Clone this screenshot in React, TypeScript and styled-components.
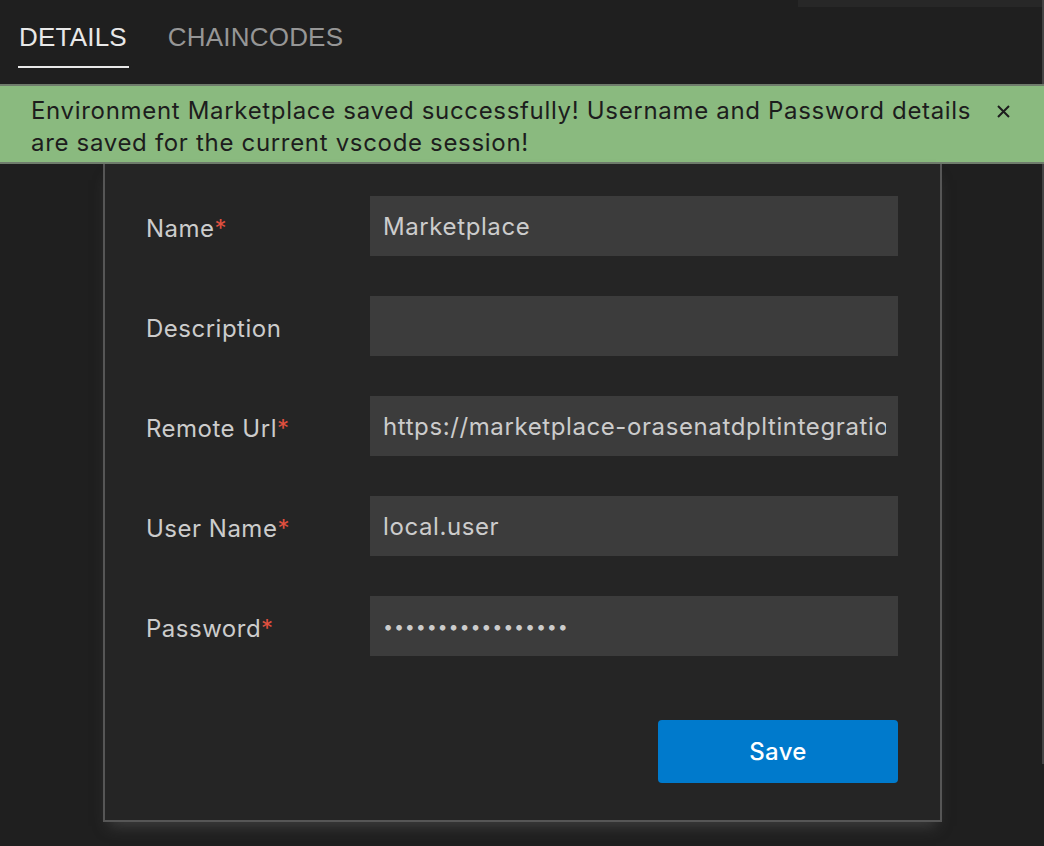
import styled, { createGlobalStyle } from "styled-components"

const GlobalStyle = createGlobalStyle`
  html, body {
    margin: 0;
    padding: 0;
    background: #1f1f1f;
  }
  * {
    box-sizing: border-box;
  }
`

const Page = styled.div`
  width: 1044px;
  height: 846px;
  overflow: hidden;
  background: #1f1f1f;
  font-family: Inter, "Open Sans", sans-serif;
`

const Header = styled.div`
  display: flex;
  height: 84px;
  padding-left: 18px;
  border-right: 2px solid #444;
`

const Tab = styled.div<{ active?: boolean }>`
  height: 68px;
  padding: 22px 2px 0 1px;
  margin-right: 38px;
  font-family: "Liberation Sans", Arial, sans-serif;
  font-size: 26px;
  line-height: 30px;
  letter-spacing: 0.2px;
  color: ${({ active }) => (active ? "#e8e8e8" : "#969696")};
  border-bottom: 2px solid ${({ active }) => (active ? "#e8e8e8" : "transparent")};
`

const TopStrip = styled.div`
  margin-left: auto;
  width: 244px;
  height: 7px;
  background: #272727;
`

const Notice = styled.div`
  display: flex;
  align-items: flex-start;
  padding: 9px 0 3px 31px;
  background: #8aba7f;
  border-top: 2px solid #6f7c6c;
  border-bottom: 2px solid #6f7c6c;
  color: #1d1d1d;
  font-size: 24px;
  line-height: 32px;
  letter-spacing: 0.68px;
`

const NoticeText = styled.div`
  flex: 1;
`

const CloseButton = styled.button`
  display: flex;
  align-items: center;
  justify-content: center;
  width: 36px;
  height: 32px;
  margin: 0 23px 0 10px;
  padding: 0;
  border: none;
  background: none;
  cursor: pointer;
`

const FormArea = styled.div`
  height: 600px;
  padding-left: 103px;
  border-right: 2px solid #444;
`

const Form = styled.div`
  width: 839px;
  padding: 32px 42px 37px 41px;
  background: #252525;
  border: 2px solid #565656;
  border-top: none;
  box-shadow: 0 10px 14px -6px rgba(90, 90, 90, 0.55);
`

const Rows = styled.div`
  display: grid;
  grid-template-columns: 224px 1fr;
  row-gap: 40px;
  align-items: center;
`

const Label = styled.label`
  padding-top: 4px;
  font-size: 24px;
  letter-spacing: 0.5px;
  color: #cccccc;
`

const Required = styled.span`
  color: #e0503f;
`

const Input = styled.input<{ secret?: boolean }>`
  width: 100%;
  height: 60px;
  padding: 0 12px 0 13px;
  border: none;
  outline: none;
  background: #3c3c3c;
  color: #cccccc;
  font-family: Inter, "Open Sans", sans-serif;
  font-size: ${({ secret }) => (secret ? "18px" : "24px")};
  letter-spacing: ${({ secret }) => (secret ? "0.8px" : "0.6px")};
`

const Actions = styled.div`
  display: flex;
  justify-content: flex-end;
  margin-top: 64px;
`

const SaveButton = styled.button`
  width: 240px;
  height: 63px;
  border: none;
  border-radius: 4px;
  background: #007acc;
  color: #ffffff;
  font-family: Inter, "Open Sans", sans-serif;
  font-size: 24px;
  font-weight: 500;
  letter-spacing: 0.3px;
  cursor: pointer;
`

const fields = [
  { label: "Name", required: true, value: "Marketplace" },
  { label: "Description", required: false, value: "" },
  {
    label: "Remote Url",
    required: true,
    value: "https://marketplace-orasenatdpltintegration-iad.blockchain.ocp.oraclecloud.com:7443",
  },
  { label: "User Name", required: true, value: "local.user" },
  { label: "Password", required: true, value: "localuserpassword", secret: true },
]

export default function App() {
  return (
    <>
      <GlobalStyle />
      <Page>
        <Header>
          <Tab active>DETAILS</Tab>
          <Tab>CHAINCODES</Tab>
          <TopStrip />
        </Header>
        <Notice>
          <NoticeText>
            Environment Marketplace saved successfully! Username and Password details are saved
            for the current vscode session!
          </NoticeText>
          <CloseButton aria-label="Close">
            <svg width="13" height="13" viewBox="0 0 13 13">
              <path d="M1 1L12 12M12 1L1 12" stroke="#1d1d1d" strokeWidth="2" />
            </svg>
          </CloseButton>
        </Notice>
        <FormArea>
          <Form>
            <Rows>
              {fields.map((f) => [
                <Label key={f.label + "-l"}>
                  {f.label}
                  {f.required && <Required>*</Required>}
                </Label>,
                <Input
                  key={f.label + "-i"}
                  type={f.secret ? "password" : "text"}
                  secret={f.secret}
                  value={f.value}
                  readOnly
                />,
              ])}
            </Rows>
            <Actions>
              <SaveButton>Save</SaveButton>
            </Actions>
          </Form>
        </FormArea>
      </Page>
    </>
  )
}
